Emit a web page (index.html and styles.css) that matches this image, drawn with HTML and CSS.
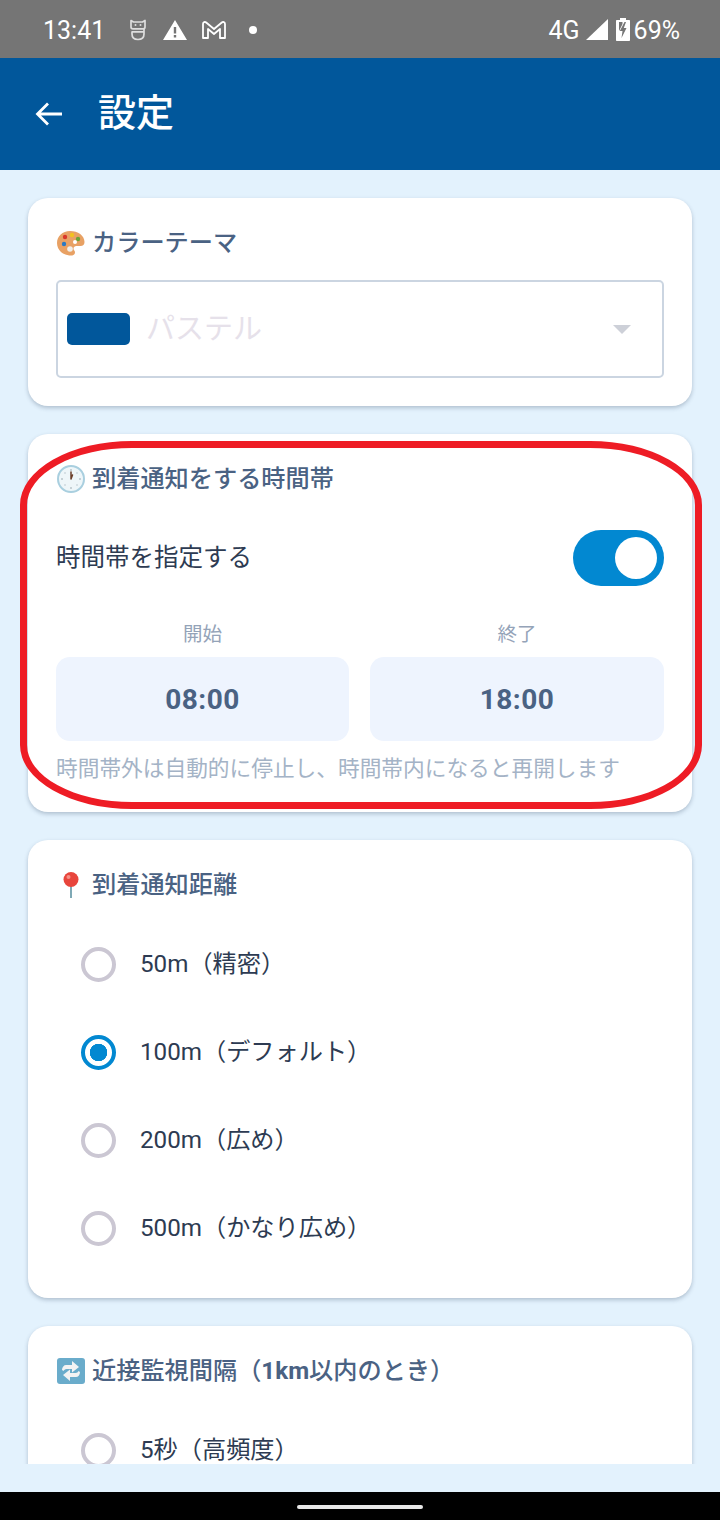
FILE: index.html
```html
<!DOCTYPE html>
<html lang="ja">
<head>
<meta charset="utf-8">
<title>設定</title>
<link rel="stylesheet" href="styles.css">
</head>
<body>
<div class="screen">
  <div class="status">
    <span class="clock">13:41</span>
    <svg class="si" width="18" height="22" viewBox="0 0 18 22"><path d="M2 1.500l2.500 1.500h9L16 1.500V8c0 1-.8 1.800-2 1.800H4C2.800 9.800 2 9 2 8z" fill="none" stroke="#ddd" stroke-width="1.700" stroke-linejoin="round"/><circle cx="6.500" cy="6" r="1" fill="#ddd"/><circle cx="11.500" cy="6" r="1" fill="#ddd"/><path d="M2.500 12.800h12.500M3 12.800V15c0 3.500 2.500 5.500 6 5.500s6-2 6-5.500v-5" fill="none" stroke="#ddd" stroke-width="1.700"/></svg>
    <svg class="si warn" width="24" height="20" viewBox="0 0 24 20"><path fill-rule="evenodd" fill="#fff" d="M12 0l12 20H0zM10.800 7v6.500h2.400V7zM10.800 15v2.400h2.400V15z"/></svg>
    <svg class="si gm" width="24" height="18" viewBox="0 0 24 18"><path d="M1 17V3c0-2 2-2.500 3.200-1.500L12 8l7.800-6.500C21 .5 23 1 23 3v14h-5V8l-6 5-6-5v9z" fill="none" stroke="#fff" stroke-width="1.800" stroke-linejoin="round"/></svg>
    <span class="dot"></span>
    <span class="status-gap"></span>
    <span class="net">4G</span>
    <svg class="si sig" width="22" height="21" viewBox="0 0 22 21"><path fill="#fff" d="M22 0v21H0z"/></svg>
    <svg class="si bat" width="14" height="23" viewBox="0 0 14 23"><path fill-rule="evenodd" fill="#fff" d="M4 0h6v2h3c.6 0 1 .4 1 1v19c0 .6-.4 1-1 1H1c-.6 0-1-.4-1-1V3c0-.6.4-1 1-1h3zM3 4v9l3.500-7v-2zM8.500 4L3.800 13H6.500L5.500 20 10.500 10H7.800L10 4z"/></svg>
    <span class="pct">69%</span>
  </div>
  <header class="appbar">
    <svg class="back" width="28" height="28" viewBox="0 0 28 28"><path d="M27 14H3M13 3.500L2.500 14 13 24.500" fill="none" stroke="#fff" stroke-width="2.800"/></svg>
    <h1 class="appbar-title">設定</h1>
  </header>
  <main class="content">
    <section class="card card-theme">
      <h2 class="card-title">
        <svg class="emoji" width="28" height="28" viewBox="0 0 28 26"><path fill="#e8a164" d="M13 1C5.500 1 0 6 0 13s6 12.500 14 12.500c3 0 4-1.500 4-3 0-2-1.500-2-1.500-4 0-2 2-2.500 4-2.500h3c2.500 0 4-1.500 4-4C27.500 5.500 21 1 13 1z"/><circle cx="8" cy="7" r="2.200" fill="#d9362b"/><circle cx="15" cy="5" r="2.200" fill="#f2c21f"/><circle cx="21" cy="9" r="2.200" fill="#6aa336"/><circle cx="7" cy="14" r="2.200" fill="#2a79c4"/><circle cx="18" cy="12" r="2" fill="#fff"/><circle cx="13" cy="19" r="2.800" fill="#f1efea"/></svg>
        <span>カラーテーマ</span>
      </h2>
      <div class="select">
        <span class="swatch"></span>
        <span class="select-value">パステル</span>
        <span class="caret"></span>
      </div>
    </section>

    <section class="card card-time">
      <h2 class="card-title">
        <svg class="emoji" width="28" height="28" viewBox="0 0 28 28"><circle cx="14" cy="14" r="13" fill="#eef6f9" stroke="#a9cfdf" stroke-width="2"/><g fill="#b9c4ca"><circle cx="14" cy="5" r="1"/><circle cx="23" cy="14" r="1"/><circle cx="14" cy="23" r="1"/><circle cx="5" cy="14" r="1"/><circle cx="20" cy="8" r=".8"/><circle cx="20" cy="20" r=".8"/><circle cx="8" cy="20" r=".8"/><circle cx="8" cy="8" r=".8"/></g><path d="M14 14V7M14 14l1.500-4" stroke="#6b3f2a" stroke-width="1.500" stroke-linecap="round"/></svg>
        <span>到着通知をする時間帯</span>
      </h2>
      <div class="switch-row">
        <span class="switch-label">時間帯を指定する</span>
        <span class="switch"><span class="knob"></span></span>
      </div>
      <div class="times">
        <div class="time-col">
          <div class="time-label">開始</div>
          <div class="time-box">08:00</div>
        </div>
        <div class="time-col">
          <div class="time-label">終了</div>
          <div class="time-box">18:00</div>
        </div>
      </div>
      <p class="hint">時間帯外は自動的に停止し、時間帯内になると再開します</p>
    </section>

    <section class="card card-dist">
      <h2 class="card-title">
        <svg class="emoji" width="28" height="28" viewBox="0 0 28 28"><path d="M14 12v15" stroke="#7fa9b5" stroke-width="2"/><circle cx="14" cy="8.500" r="7.500" fill="#e8453c"/><circle cx="11.500" cy="6" r="2" fill="#f68f86"/></svg>
        <span>到着通知距離</span>
      </h2>
      <div class="radios">
        <div class="radio-row"><span class="radio"></span><span class="radio-text">50m（精密）</span></div>
        <div class="radio-row"><span class="radio on"></span><span class="radio-text">100m（デフォルト）</span></div>
        <div class="radio-row"><span class="radio"></span><span class="radio-text">200m（広め）</span></div>
        <div class="radio-row"><span class="radio"></span><span class="radio-text">500m（かなり広め）</span></div>
      </div>
    </section>

    <section class="card card-near">
      <h2 class="card-title">
        <svg class="emoji" width="28" height="28" viewBox="0 0 28 28"><rect x="0" y="1" width="28" height="26" rx="3" fill="#6aaccb"/><path d="M5 13c0-3 2-5 4-5h6V4l7 6-7 5.500V12H9.500c-1.500 0-2.500 1-3 2z" fill="#f3f3f3"/><path d="M23 15c0 3-2 5-4 5h-6v4l-7-6 7-5.500V16h5.500c1.500 0 2.500-1 3-2z" fill="#f3f3f3"/></svg>
        <span>近接監視間隔（<b class="latin">1km</b>以内のとき）</span>
      </h2>
      <div class="radios">
        <div class="radio-row"><span class="radio"></span><span class="radio-text">5秒（高頻度）</span></div>
      </div>
    </section>
  </main>
  <div class="bottom-gap"></div>
  <div class="navbar"><span class="home"></span></div>
  <div class="annotation"></div>
</div>
</body>
</html>
```
FILE: styles.css
```css
* { box-sizing: border-box; }
html, body { margin: 0; padding: 0; }
body {
  width: 720px;
  height: 1520px;
  overflow: hidden;
  font-family: Roboto, "Noto Sans CJK JP", sans-serif;
  background: #e3f2fd;
}
.screen {
  position: relative;
  width: 720px;
  height: 1520px;
  display: flex;
  flex-direction: column;
  background: #e3f2fd;
}
.status {
  flex: none;
  height: 58px;
  background: #757575;
  color: #fff;
  display: flex;
  align-items: center;
  padding: 2px 40px 0 43px;
  font-size: 25px;
}
.clock { width: 86px; flex: none; font-weight: 400; }
.si { flex: none; display: block; }
.warn { margin-left: 16px; }
.gm { margin-left: 15px; }
.dot { width: 8px; height: 8px; border-radius: 50%; background: #fff; margin-left: 23px; margin-bottom: 1px; }
.status-gap { flex: 1; }
.net { margin-right: 6px; }
.sig { margin-right: 8px; margin-bottom: 2px; }
.bat { margin-right: 4px; margin-bottom: 2px; }
.appbar {
  flex: none;
  height: 112px;
  background: #01579b;
  display: flex;
  align-items: center;
  padding-left: 35px;
  color: #fff;
}
.back { flex: none; }
.appbar-title {
  margin: 0 0 0 35px;
  font-size: 38px;
  line-height: 1.2;
  font-weight: 500;
}
.content {
  flex: none;
  height: 1294px;
  padding: 28px 28px 0;
  display: flex;
  flex-direction: column;
  gap: 28px;
  overflow: hidden;
}
.card {
  flex: none;
  background: #fff;
  border-radius: 20px;
  box-shadow: 0 2px 4px rgba(40, 60, 90, .28);
  padding: 28px;
}
.card-theme { height: 208px; }
.card-time { height: 378px; }
.card-dist { height: 458px; }
.card-near { height: 300px; }
.card-title {
  margin: 0;
  height: 34px;
  display: flex;
  align-items: center;
  gap: 7px;
  font-size: 24.200px;
  line-height: 34px;
  font-weight: 500;
  color: #4a6283;
}
.latin { font-weight: 700; }
.emoji { flex: none; display: block; margin-left: 1px; }
.select {
  margin-top: 20px;
  height: 98px;
  border: 2px solid #cbd5e1;
  border-radius: 5px;
  display: flex;
  align-items: center;
  padding: 0 31px 0 9px;
}
.swatch { width: 63px; height: 32px; border-radius: 5px; background: #01579b; }
.select-value { margin-left: 17px; font-size: 29px; color: #e6e1ea; margin-bottom: 7px; margin-left: 16px; }
.caret {
  margin-left: auto;
  width: 0; height: 0;
  border-left: 9px solid transparent;
  border-right: 9px solid transparent;
  border-top: 9px solid #cdd0d8;
}
.switch-row {
  margin-top: 34px;
  height: 56px;
  display: flex;
  align-items: center;
  justify-content: space-between;
}
.switch-label { font-size: 24.500px; color: #2d3b52; margin-bottom: 5px; }
.switch {
  width: 91px; height: 56px; border-radius: 28px; background: #0288d1;
  display: flex; align-items: center; justify-content: flex-end; padding-right: 7px;
}
.knob { width: 42px; height: 42px; border-radius: 50%; background: #fff; }
.times { margin-top: 36px; display: grid; grid-template-columns: 293px 1fr; gap: 21px; }
.time-col { display: flex; flex-direction: column; align-items: center; }
.time-label { font-size: 19.500px; line-height: 26px; color: #94a3b8; }
.time-box {
  margin-top: 9px;
  width: 100%;
  height: 84px;
  border-radius: 14px;
  background: #eef4fe;
  display: flex; align-items: center; justify-content: center;
  font-size: 28px; font-weight: 700; color: #4a6283; letter-spacing: .5px;
}
.hint { margin: 13px 0 0; font-size: 21.700px; line-height: 30px; color: #a4b3c6; }
.radios { margin-top: 18px; display: flex; flex-direction: column; }
.radio-row { height: 88px; display: flex; align-items: center; padding-left: 25px; }
.radio {
  flex: none;
  width: 35px; height: 35px; border-radius: 50%;
  border: 4px solid #cbc7d3;
  background: #fff;
}
.radio.on {
  border-color: #0288d1;
  background: radial-gradient(circle, #0288d1 0 8.500px, #fff 9px);
}
.radio-text { margin-left: 24px; font-size: 24.200px; color: #2d3b52; margin-bottom: 5px; }
.bottom-gap { flex: none; height: 28px; }
.navbar {
  flex: none;
  height: 28px;
  background: #000;
  position: relative;
}
.home {
  position: absolute;
  left: 297px; top: 13px;
  width: 126px; height: 4px;
  border-radius: 2px;
  background: #e8e8e8;
}
.annotation {
  position: absolute;
  left: 20px; top: 441px;
  width: 682px; height: 368px;
  border: 7.500px solid #ee1c25;
  border-radius: 112px / 64px;
  pointer-events: none;
}
```
